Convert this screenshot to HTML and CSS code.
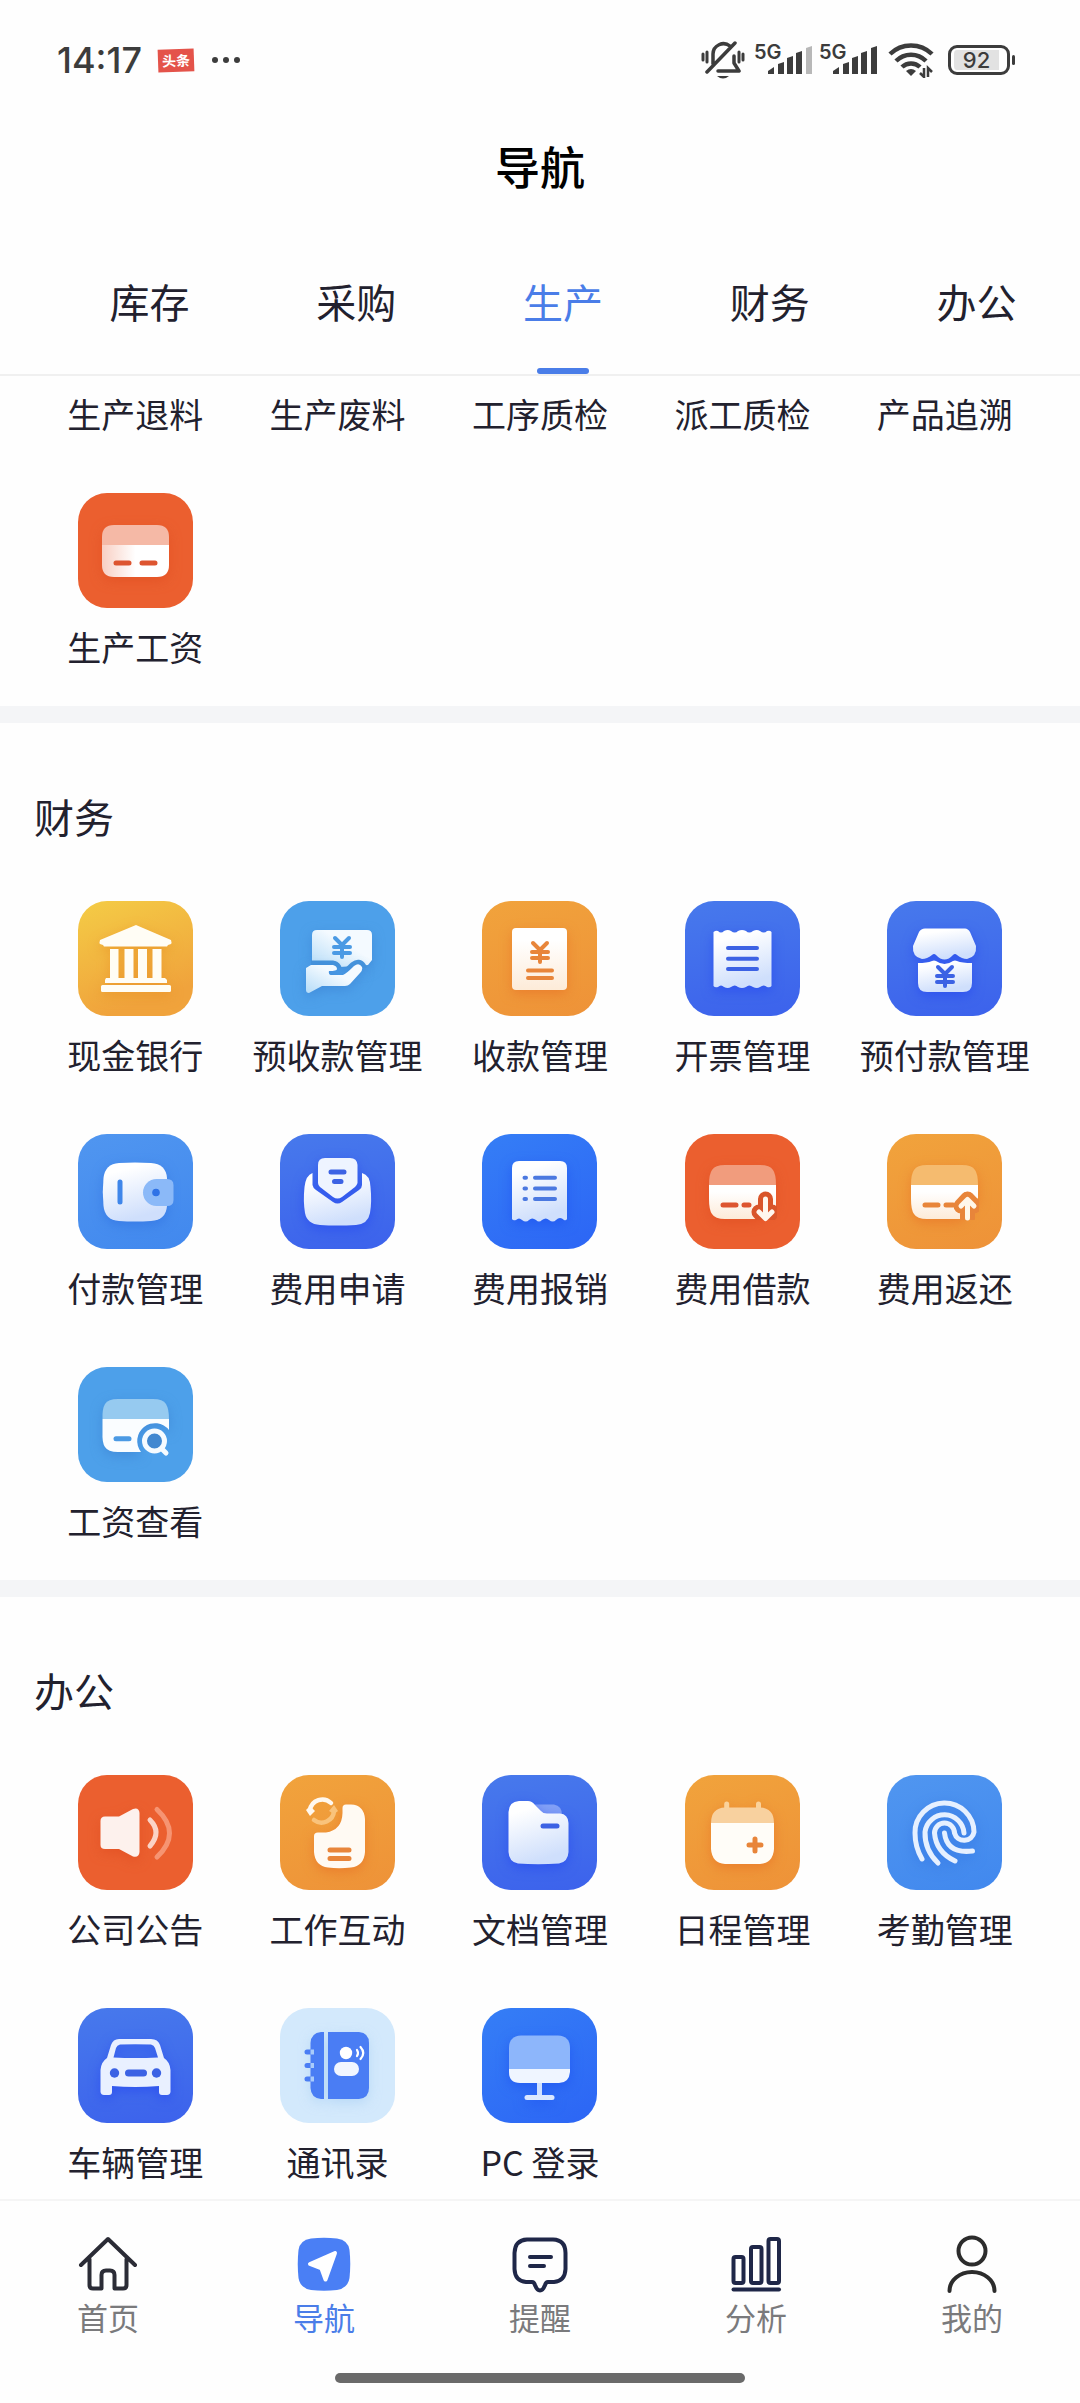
FILE: index.html
```
<!DOCTYPE html>
<html lang="zh-CN">
<head>
  <meta charset="UTF-8">
  <meta name="viewport" content="width=device-width, initial-scale=1.0">
  <title>导航</title>
  <link rel="stylesheet" href="styles.css">
</head>
<body>
  <!-- Shared gradients, card clips and the yuan sign -->
  <svg class="defs" width="0" height="0" aria-hidden="true">
    <defs>
      <linearGradient id="g-blue" x1="0" y1="0" x2="0.3" y2="1">
        <stop offset="0.2" stop-color="#ffffff"/><stop offset="1" stop-color="#cfdffc"/>
      </linearGradient>
      <linearGradient id="g-warm" x1="0" y1="0" x2="0" y2="1">
        <stop offset="0.2" stop-color="#ffffff"/><stop offset="1" stop-color="#fdebd8"/>
      </linearGradient>
      <linearGradient id="g-red" x1="0" y1="0" x2="1" y2="0">
        <stop offset="0" stop-color="#f8cfc3"/><stop offset="0.5" stop-color="#ffffff"/>
      </linearGradient>
      <linearGradient id="g-hand" x1="0" y1="1" x2="1" y2="0">
        <stop offset="0" stop-color="#b5dcf8"/><stop offset="0.6" stop-color="#f4faff"/>
      </linearGradient>
      <clipPath id="c-card"><rect x="23" y="51" width="69" height="35"/></clipPath>
      <clipPath id="c-note"><rect x="31" y="28" width="62" height="39"/></clipPath>
      <symbol id="yuan" viewBox="-12 -12 24 24" overflow="visible">
        <path d="M-7 -9 L0 -2 L7 -9 M0 -2 V10 M-8 0 H8 M-8 6 H8" fill="none" stroke="currentColor" stroke-width="4" stroke-linecap="round" stroke-linejoin="round"/>
      </symbol>
    </defs>
  </svg>

  <div class="app">
    <header>
      <div class="status-bar">
        <div class="status-left">
          <span class="time">14:17</span>
          <span class="news">头条</span>
          <svg width="30" height="8" viewBox="0 0 30 8" fill="#3c3c3c"><circle cx="4" cy="4" r="3"/><circle cx="15" cy="4" r="3"/><circle cx="26" cy="4" r="3"/></svg>
        </div>
        <div class="status-right">
          <svg class="bell" width="44" height="40" viewBox="0 0 44 40" fill="none" stroke="#3c3c3c" stroke-width="3.500" stroke-linecap="round" stroke-linejoin="round">
            <path d="M12 24 V14 A10.500 10.500 0 0 1 29 6 M33 16 V23 L38 31 H17 M6 32 L34 3"/>
            <path d="M2 14 V20 M6 12 V22 M38 12 V22 M42 14 V20" stroke-width="3"/>
            <path d="M16 36 H28 Q22 41 16 36Z" fill="#3c3c3c" stroke="none"/>
          </svg>
          <svg width="60" height="46" viewBox="0 -6 60 46">
            <text class="net" x="1" y="16">5G</text>
            <g fill="#3c3c3c">
              <path d="M15 31 V28 L21 24 V31Z"/><path d="M25 31 V21 L31 19 V31Z"/><path d="M34 31 V15 L40 13 V31Z"/><path d="M43 31 V10 L49 8 V31Z"/>
              <path d="M53 31 V5 L59 3 V31Z" fill="#b8b8b8"/>
            </g>
          </svg>
          <svg width="60" height="46" viewBox="0 -6 60 46">
            <text class="net" x="1" y="16">5G</text>
            <g fill="#3c3c3c">
              <path d="M15 31 V28 L21 24 V31Z"/><path d="M25 31 V21 L31 19 V31Z"/><path d="M34 31 V15 L40 13 V31Z"/><path d="M43 31 V10 L49 8 V31Z"/><path d="M53 31 V5 L59 3 V31Z"/>
            </g>
          </svg>
          <svg class="wifi" width="46" height="36" viewBox="0 0 46 36" fill="none" stroke="#3c3c3c" stroke-width="4.500">
            <path d="M2 12 A30 30 0 0 1 44 12 M8 19 A21 21 0 0 1 38 19 M14 25 A13 13 0 0 1 32 25"/>
            <path d="M18 29 Q23 25 28 29 L23 34Z" fill="#3c3c3c" stroke="none"/>
            <path d="M36 26 V35 L32 31 M40 35 V26 L44 30" stroke-width="2.500"/>
          </svg>
          <div class="battery">92</div>
        </div>
      </div>
      <h1>导航</h1>
      <nav class="tabs">
        <button type="button">库存</button>
        <button type="button">采购</button>
        <button type="button" class="active">生产</button>
        <button type="button">财务</button>
        <button type="button">办公</button>
      </nav>
    </header>

    <main>
      <section class="group production">
        <div class="grid">
          <a href="#"><span>生产退料</span></a>
          <a href="#"><span>生产废料</span></a>
          <a href="#"><span>工序质检</span></a>
          <a href="#"><span>派工质检</span></a>
          <a href="#"><span>产品追溯</span></a>
          <a href="#">
            <svg class="tile red" viewBox="0 0 115 115">
              <g class="art">
                <path d="M24 52 V44 Q24 32 36 32 H79 Q91 32 91 44 V52Z" fill="#f5b9a6"/>
                <path d="M24 52 H91 V72 Q91 84 79 84 H36 Q24 84 24 72Z" fill="url(#g-red)"/>
              </g>
              <path d="M38 70 H51 M64 70 H77" class="line w5"/>
            </svg>
            <span>生产工资</span>
          </a>
        </div>
      </section>

      <section class="group">
        <h2>财务</h2>
        <div class="grid">
          <a href="#">
            <svg class="tile yellow" viewBox="0 0 115 115">
              <g class="art" fill="#fffdf5">
                <path d="M58 24 L93 39 Q94 42 93 43 L90 44 L89 45.500 H26 L25 44 L22 43 Q21 42 22 39Z"/>
                <path d="M32 48 H40.500 V77 H32Z M46.500 48 H55.500 V77 H46.500Z M60 48 H69 V77 H60Z M74.500 48 H83.500 V77 H74.500Z"/>
                <path d="M28 77 H87 L89 79 V82 H27 V79Z"/><rect x="23" y="84" width="70" height="7" rx="1.500"/>
              </g>
            </svg>
            <span>现金银行</span>
          </a>
          <a href="#">
            <svg class="tile sky" viewBox="0 0 115 115">
              <path class="art" d="M32 60 V34 Q32 29 37 29 H87 Q92 29 92 34 V59 L88 64 L60 66 L55 60Z" fill="url(#g-hand)"/>
              <path d="M31 64 H53 Q57 65 57 68 Q57 70 49 70 Q48 74 52 74 H63 Q66 73 74 65 Q79 61 82 66 Q83 69 80 72 L70 83 H42 L26 89Z" clip-path="url(#c-note)" fill="#4593dc" stroke="#4593dc" stroke-width="9" stroke-linejoin="round"/>
              <path class="art" d="M31 64 H53 Q57 65 57 68 Q57 70 49 70 Q48 74 52 74 H63 Q66 73 74 65 Q79 61 82 66 Q83 69 80 72 L70 83 Q68 85 65 85 H42 L29 92 Q26 92 26 89 V67Z" fill="url(#g-hand)"/>
              <use href="#yuan" x="50" y="34" width="24" height="24"/>
            </svg>
            <span>预收款管理</span>
          </a>
          <a href="#">
            <svg class="tile orange" viewBox="0 0 115 115">
              <rect class="art" x="30" y="27" width="55" height="62" rx="4" fill="url(#g-warm)"/>
              <use href="#yuan" x="46" y="39" width="24" height="24"/>
              <path d="M46 69.500 H70 M46 77 H70" class="line w4"/>
            </svg>
            <span>收款管理</span>
          </a>
          <a href="#">
            <svg class="tile blue" viewBox="0 0 115 115">
              <path class="art" d="M28.500 31 Q31 29 33 30 Q36 33 39 30 Q43 28 46 30 Q50 33 53 30 Q57 28 61 30 Q64 33 68 30 Q72 28 75 30 Q79 33 82 30 Q85 29 86.500 31 V85 Q85 87 82 86 Q79 83 75 86 Q72 88 68 86 Q64 83 61 86 Q57 88 53 86 Q50 83 46 86 Q43 88 39 86 Q36 83 33 86 Q30 87 28.500 85Z" fill="url(#g-blue)"/>
              <path d="M43 47 H72 M43 57.700 H72 M43 68 H72" class="line w4"/>
            </svg>
            <span>开票管理</span>
          </a>
          <a href="#">
            <svg class="tile blue" viewBox="0 0 115 115">
              <g class="art" fill="url(#g-blue)">
                <path d="M38 27.500 H78 Q81 27.500 83 31 L89 45 Q90 56 80 58 Q75 58 70 54 Q68 52 66 54 Q57.500 63 49 54 Q47 52 45 54 Q40 58 35 58 Q25 56 26 45 L32 31 Q34 27.500 38 27.500Z"/>
                <path d="M31 62 Q40 62 45 60 Q47 59 49 60 Q57.500 66 66 60 Q68 59 70 60 Q75 62 85 62 V82 Q85 91 76 91 H40 Q31 91 31 82Z"/>
              </g>
              <use href="#yuan" x="46" y="63" width="24" height="24"/>
            </svg>
            <span>预付款管理</span>
          </a>
          <a href="#">
            <svg class="tile azure" viewBox="0 0 115 115">
              <path class="art" d="M41 29 Q57 28 73 29 Q88 30 89 44 V72 Q88 86 73 87 Q57 88 41 87 Q27 86 25.500 72 Q24 58 25.500 44 Q27 30 41 29Z" fill="url(#g-blue)"/>
              <path d="M78.500 45 H89 Q95.500 45 95.500 51 V66 Q95.500 72 89 72 H78.500 A13.500 13.500 0 0 1 78.500 45Z" fill="#8bb9f8"/>
              <circle cx="78" cy="58.500" r="3.800" fill="#2f72e6"/>
              <path d="M42 48 V68" class="line w5"/>
            </svg>
            <span>付款管理</span>
          </a>
          <a href="#">
            <svg class="tile blue" viewBox="0 0 115 115">
              <g class="art">
                <path d="M45 24 H70 Q77 24 77.500 31 V49 Q77 51 75 53 L62 63 Q57.500 66 53 63 L40 53 Q38 51 38 49 V31 Q38 24 45 24Z" fill="#eef4ff"/>
                <path d="M32.500 39 V51 Q33 54 36 56 L53 68 Q57.500 71 62 68 L79 56 Q82 54 82 51 V39 Q90 41 90.500 53 Q92 68 90 79 Q88 90 76 91 Q57 92 40 91 Q27 90 25 79 Q23 67 24.500 53 Q26 41 32.500 39Z" fill="url(#g-blue)"/>
              </g>
              <path d="M51 38 H64 M54.500 47.500 H61" class="line w5"/>
            </svg>
            <span>费用申请</span>
          </a>
          <a href="#">
            <svg class="tile royal" viewBox="0 0 115 115">
              <path class="art" d="M30 85 V34 Q30 27 37 27 H78 Q85 27 85 34 V85 Q84 87 82 86 Q78 82 74 86 Q71 89 67 86 Q64 83 60 86 Q57 89 54 86 Q50 83 47 86 Q44 89 40 86 Q37 83 34 86 Q31 87 30 85Z" fill="url(#g-blue)"/>
              <path d="M42.500 43.700 H44 M53 43.700 H73 M42.500 54.500 H44 M53 54.500 H73 M42.500 65 H44 M53 65 H73" class="line w4"/>
            </svg>
            <span>费用报销</span>
          </a>
          <a href="#">
            <svg class="tile red" viewBox="0 0 115 115">
              <g class="art">
                <path d="M24 51 Q24 40 27 36 Q30 31 40 31 H75 Q85 31 88 36 Q91 40 91 51Z" fill="#f19c7d"/>
                <path d="M24 51 H91 V72 L72 85 H40 Q30 85 27 80 Q24 76 24 65Z" fill="url(#g-warm)"/>
              </g>
              <path d="M38 71 H51 M59 71 H64" class="line w5"/>
              <path d="M80.500 65 V84 M74 78 L80.500 85 L87 78" clip-path="url(#c-card)" fill="none" stroke="#d9552a" stroke-width="15" stroke-linecap="round" stroke-linejoin="round"/>
              <path d="M80.500 65 V84 M74 78 L80.500 84.500 L87 78" fill="none" stroke="#fff7ee" stroke-width="5" stroke-linecap="round" stroke-linejoin="round"/>
            </svg>
            <span>费用借款</span>
          </a>
          <a href="#">
            <svg class="tile orange" viewBox="0 0 115 115">
              <g class="art">
                <path d="M24 51 Q24 40 27 36 Q30 31 40 31 H75 Q85 31 88 36 Q91 40 91 51Z" fill="#f5bb6f"/>
                <path d="M24 51 H91 V64 L80 76 L73 85 H40 Q30 85 27 80 Q24 76 24 65Z" fill="url(#g-warm)"/>
              </g>
              <path d="M38 71 H51 M59 71 H66" class="line w5"/>
              <path d="M80.500 84 V65 M74 72 L80.500 65 L87 72" clip-path="url(#c-card)" fill="none" stroke="#e8853a" stroke-width="15" stroke-linecap="round" stroke-linejoin="round"/>
              <path d="M80.500 84 V66 M74 72 L80.500 65.500 L87 72" fill="none" stroke="#fff7ea" stroke-width="5" stroke-linecap="round" stroke-linejoin="round"/>
            </svg>
            <span>费用返还</span>
          </a>
          <a href="#">
            <svg class="tile sky" viewBox="0 0 115 115">
              <g class="art">
                <path d="M24.500 52 Q24 42 27 37 Q30 32 40 32 H75 Q85 32 88 37 Q91 42 91 52Z" fill="#96caf0"/>
                <path d="M24.500 52 H91 V63 A17 17 0 0 0 63 85 H40 Q30 85 27 80 Q24 76 24.500 65Z" fill="#fafdff"/>
              </g>
              <circle cx="76.500" cy="74" r="9" fill="#4288d0"/>
              <circle cx="76.500" cy="74" r="10" fill="none" stroke="#f6fbff" stroke-width="5"/>
              <path d="M84 82 L88 86" stroke="#f6fbff" stroke-width="5" stroke-linecap="round"/>
              <path d="M38 71.700 H51" class="line w5"/>
            </svg>
            <span>工资查看</span>
          </a>
        </div>
      </section>

      <section class="group">
        <h2>办公</h2>
        <div class="grid">
          <a href="#">
            <svg class="tile red" viewBox="0 0 115 115">
              <path class="art" d="M27 41.500 H41 L55 34 Q61 32 61.500 38 V77 Q61 83 55 81.500 L41 74 H27 Q22.500 74 22.500 70 V46 Q22.500 41.500 27 41.500Z" fill="#fdf1ed"/>
              <g fill="none" stroke-width="5" stroke-linecap="round">
                <path d="M72 45 Q84 57 72 71" stroke="#fbd3c6"/><path d="M79 34.500 Q104 58 79 82" stroke="#f69472"/>
              </g>
            </svg>
            <span>公司公告</span>
          </a>
          <a href="#">
            <svg class="tile orange" viewBox="0 0 115 115">
              <path class="art" d="M66 29.500 H71 Q84 30 85 44 V77 Q84 91 71 92.500 Q59 94 48 92.500 Q35 91 34 77 V61 Q34 57.500 38 57.500 H46 Q62 55 62.500 38 V33 Q62.500 29.500 66 29.500Z" fill="#fffaf3"/>
              <path d="M50 75 H69 M50 83.500 H69" class="line w5"/>
              <g fill="none" stroke-width="4.500" stroke-linecap="round">
                <path d="M30 35 A12.500 12.500 0 0 1 51 28" stroke="#fff8ef"/><path d="M54 36 A12.500 12.500 0 0 1 34 45" stroke="#f9c37c"/>
              </g>
              <path d="M26 35 L30 31 L35 36 L30 41Z" fill="#fff8ef"/><path d="M49 36 L54 30 L58 36 L54 39Z" fill="#f9c37c"/>
            </svg>
            <span>工作互动</span>
          </a>
          <a href="#">
            <svg class="tile blue" viewBox="0 0 115 115">
              <path d="M50 29.500 H72 Q80 31 80 40 H50Z" fill="#83a1f6"/>
              <path class="art" d="M37 26 H46 Q50 26 53 30 L59 36 Q61 38.500 65 38.500 H78 Q86 39 86.500 48 V77 Q86 87 77 88.500 Q56 90 36 88.500 Q27 87 26.500 77 V37 Q27 26.500 37 26Z" fill="url(#g-blue)"/>
              <path d="M61 51 H75" class="line w5"/>
            </svg>
            <span>文档管理</span>
          </a>
          <a href="#">
            <svg class="tile orange" viewBox="0 0 115 115">
              <g class="art">
                <path d="M41.700 29 V36 M73.500 29 V36" stroke="#fad29b" stroke-width="5" stroke-linecap="round"/>
                <path d="M26 48 Q26 33 40 32.500 H75 Q89 33 89 48Z" fill="#f8d19f"/>
                <path d="M26 48 H89 V74 Q88 88 75 89 H40 Q27 88 26 74Z" fill="#fffdf8"/>
              </g>
              <path d="M64 70 H76 M70 64 V76" class="line w5"/>
            </svg>
            <span>日程管理</span>
          </a>
          <a href="#">
            <svg class="tile azure" viewBox="0 0 115 115">
              <g class="art" fill="none" stroke="#e6f0ff" stroke-width="5" stroke-linecap="round">
                <path d="M35 84 Q28 72 28 58 A29.500 29.500 0 0 1 87 57 A10 10 0 0 1 67.500 58 A10 10 0 0 0 47.500 58 Q49 77 68 86"/>
                <path d="M51 88 Q37.500 75 38 57 A19.600 19.600 0 0 1 77 58"/>
                <path d="M57.500 58 Q60 79 85.500 76"/>
              </g>
            </svg>
            <span>考勤管理</span>
          </a>
          <a href="#">
            <svg class="tile blue" viewBox="0 0 115 115">
              <path class="art" fill-rule="evenodd" fill="#e9f0ff" d="M41 31 H73 Q80 31 82 37 L86 50 Q92 54 92.500 62 V84 Q92 87 89 87 H84 Q81 87 81 84 V78 Q57 80 34 78 V84 Q34 87 31 87 H26 Q23 87 22.500 84 V62 Q23 54 29 50 L33 37 Q35 31 41 31Z M42 36.500 Q39 37 38 40 L35.500 49.500 Q57 50.500 80 49.500 L77 40 Q76 37 73 36.500 Q57 36 42 36.500Z"/>
              <circle cx="36.500" cy="65" r="4.700" fill="currentColor"/><circle cx="78.500" cy="65" r="4.700" fill="currentColor"/>
              <path d="M50.500 65 H65.500" class="line" stroke-width="7"/>
            </svg>
            <span>车辆管理</span>
          </a>
          <a href="#">
            <svg class="tile pale" viewBox="0 0 115 115">
              <path class="art" d="M44 24 V91 H41 Q31 90 30.500 80 V35 Q31 25 41 24Z M48 24 H79 Q89 25 89 35 V80 Q89 90 79 91 H48Z" fill="#4a7df4"/>
              <path d="M27 44 H33 M27 57.500 H33 M27 71 H33" class="line w5"/>
              <path d="M30.500 44 H34 M30.500 57.500 H34 M30.500 71 H34" stroke="#a9cbfa" stroke-width="5"/>
              <circle cx="66" cy="45" r="6.200" fill="#fff"/>
              <rect x="54" y="54" width="25" height="14" rx="7" fill="#f1f6ff"/>
              <path d="M77 42 Q79 45 77 48 M80.500 39 Q86 45 80.500 51" fill="none" stroke="#fff" stroke-width="2.200" stroke-linecap="round"/>
            </svg>
            <span>通讯录</span>
          </a>
          <a href="#">
            <svg class="tile royal" viewBox="0 0 115 115">
              <g class="art">
                <path d="M27 61 V40 Q27 28 39 27.500 H76 Q88 28 88 40 V61Z" fill="#8db6fb"/>
                <path d="M27 61 H88 V64 Q87 75 77 75 H38 Q27 75 27 64Z" fill="#eff5ff"/>
                <path d="M57.500 75 V88" stroke="#cfe0ff" stroke-width="5"/><path d="M45 89.500 H70" stroke="#dbe8ff" stroke-width="5" stroke-linecap="round"/>
              </g>
            </svg>
            <span>PC 登录</span>
          </a>
        </div>
      </section>
    </main>

    <footer>
      <nav class="bottom-nav">
        <a href="#">
          <svg viewBox="0 0 60 60" stroke="#2b2c36"><path d="M3 30 L30 4 L57 30 M11.500 24 V50 Q11.500 53.500 15 53.500 H23.500 V40 Q23.500 35.500 28 35.500 H32 Q36.500 35.500 36.500 40 V53.500 H45 Q48.500 53.500 48.500 50 V24"/></svg>
          <span>首页</span>
        </a>
        <a href="#" class="active">
          <svg viewBox="0 0 60 60"><path d="M17 3.500 Q30 2 43 3.500 Q54 5 55.500 15 Q57 29 55.500 43 Q54 53 43 55 Q30 56.500 17 55 Q6 53 4.500 43 Q3 29 4.500 15 Q6 5 17 3.500Z" fill="#4a7ff5"/><path d="M41 18 L16 29 L27.500 33.500 L31.500 44.500Z" fill="#fff" stroke="#fff"/></svg>
          <span>导航</span>
        </a>
        <a href="#">
          <svg viewBox="0 0 60 60" stroke="#1f2748"><path d="M17 4.500 H43 Q55.500 5 55.500 18 V34 Q55 46 44 47 H38 Q36 47 35 50 Q33 55.500 30 55.500 Q27 55.500 25 50 Q24 47 22 47 H16 Q5 46 4.500 34 V18 Q5 5 17 4.500Z M20 22 H41 M20 31 H34"/></svg>
          <span>提醒</span>
        </a>
        <a href="#">
          <svg viewBox="0 0 60 60" stroke="#1f2748"><rect x="7.500" y="22" width="10" height="26" rx="2"/><rect x="25" y="12" width="10.500" height="36" rx="2"/><rect x="42.500" y="4" width="10.500" height="44" rx="2"/><path d="M7.500 54.500 H53"/></svg>
          <span>分析</span>
        </a>
        <a href="#">
          <svg viewBox="0 0 60 60" stroke="#2c2c2c"><circle cx="30" cy="16" r="13.500"/><path d="M7.500 56 A22.500 19 0 0 1 52.500 56"/></svg>
          <span>我的</span>
        </a>
      </nav>
      <div class="home-bar"></div>
    </footer>
  </div>
</body>
</html>
```
FILE: styles.css
```
* {
  margin: 0;
  padding: 0;
  box-sizing: border-box;
}

body {
  font-family: "Noto Sans CJK SC", sans-serif;
  background: #fefefe;
  color: #22212e;
}

a {
  color: inherit;
  text-decoration: none;
}

svg {
  display: block;
  flex: none;
}

.defs {
  position: absolute;
}

.app {
  display: flex;
  flex-direction: column;
  min-height: 100vh;
}

main {
  flex: 1;
}

/* Status bar */
.status-bar {
  display: flex;
  justify-content: space-between;
  align-items: center;
  height: 120px;
  padding: 0 70px 0 57px;
  color: #3c3c3c;
}

.status-left,
.status-right {
  display: flex;
  align-items: center;
}

.time {
  font: 500 36px/44px Inter, sans-serif;
  margin-right: 16px;
}

.news {
  width: 36px;
  margin-right: 17px;
  background: #e4534a;
  color: #fff;
  font-size: 14px;
  font-weight: 700;
  line-height: 23px;
  text-align: center;
  transform: rotate(-2deg);
}

.bell {
  margin-right: 8px;
}

.net {
  font: 600 20px Inter, sans-serif;
  fill: #3c3c3c;
}

.status-right svg + svg {
  margin-right: 5px;
}

.status-right .wifi {
  margin: 0 14px 0 5px;
}

.battery {
  position: relative;
  width: 62px;
  height: 30px;
  border: 3px solid #3c3c3c;
  border-radius: 9px;
  background: #e2e2e2;
  background-clip: content-box;
  padding: 2px 8px 2px 3px;
  font: 500 22px/20px Inter, sans-serif;
  text-align: center;
}

.battery::after {
  content: "";
  position: absolute;
  right: -8px;
  top: 7px;
  width: 3px;
  height: 10px;
  border-radius: 2px;
  background: #3c3c3c;
}

h1 {
  color: #000;
  font-size: 45px;
  font-weight: 500;
  line-height: 92px;
  text-align: center;
}

/* Category tabs */
.tabs {
  display: flex;
  padding-left: 46px;
  border-bottom: 2px solid #f0f0f0;
}

.tabs button {
  flex: 1;
  display: flex;
  flex-direction: column;
  align-items: center;
  gap: 39px;
  padding-top: 61px;
  background: none;
  border: none;
  color: inherit;
  font-family: inherit;
  font-size: 40px;
  line-height: 56px;
  cursor: pointer;
}

.tabs button::after {
  content: "";
  width: 52px;
  height: 6px;
  border-radius: 3px;
}

.tabs .active {
  color: #4a7de8;
}

.tabs .active::after {
  background: #4a7de8;
}

/* Groups of shortcuts */
.group {
  padding: 65px 34px 35px;
}

.group + .group {
  border-top: 17px solid #f4f5f7;
}

.group:last-child {
  padding-bottom: 13px;
}

.production {
  padding-top: 14px;
}

h2 {
  margin-bottom: 57px;
  font-size: 40px;
  font-weight: 400;
  line-height: 56px;
}

.grid {
  display: grid;
  grid-template-columns: repeat(5, 1fr);
  row-gap: 55px;
}

.grid a {
  display: flex;
  flex-direction: column;
  align-items: center;
  gap: 15px;
  font-size: 34px;
  line-height: 48px;
  white-space: nowrap;
}

.tile {
  width: 115px;
  height: 115px;
  border-radius: 29px;
}

.tile .line {
  fill: none;
  stroke: currentColor;
  stroke-linecap: round;
}

.tile .w4 {
  stroke-width: 4px;
}

.tile .w5 {
  stroke-width: 5px;
}

.art {
  filter: drop-shadow(0 4px 6px var(--shade));
}

.red {
  --shade: #e04c2099;
  background: #eb5f2f;
  color: #dd5530;
}

.orange {
  --shade: #e8702499;
  background: linear-gradient(160deg, #f1a33c, #ee9238);
  color: #e8853a;
}

.yellow {
  --shade: #e8902499;
  background: linear-gradient(160deg, #f4cc46, #f0a33c 80%);
  color: #f0a63c;
}

.sky {
  --shade: #3a80d099;
  background: #4da0ea;
  color: #4b9ae4;
}

.azure {
  --shade: #2f6fe099;
  background: linear-gradient(160deg, #5096f0, #4188ee);
  color: #3f86ea;
}

.blue {
  --shade: #2446f099;
  background: linear-gradient(170deg, #4779ec, #3c62ec);
  color: #3c62e4;
}

.royal {
  --shade: #1c50f099;
  background: linear-gradient(150deg, #357ef6, #2c65f5);
  color: #4a78e0;
}

.pale {
  --shade: #a8cef499;
  background: #d3e9fc;
  color: #4a7df4;
}

/* Bottom navigation */
footer {
  border-top: 2px solid #f5f5f5;
  padding: 34px 0 20px;
}

.bottom-nav {
  display: flex;
  margin-bottom: 34px;
}

.bottom-nav a {
  flex: 1;
  display: flex;
  flex-direction: column;
  align-items: center;
  color: #7a7a7c;
  font-size: 31px;
  line-height: 44px;
}

.bottom-nav .active {
  color: #4a7de8;
}

.bottom-nav svg {
  width: 60px;
  height: 60px;
  fill: none;
  stroke-width: 4px;
  stroke-linecap: round;
  stroke-linejoin: round;
}

.home-bar {
  width: 38%;
  height: 10px;
  margin: 0 auto;
  border-radius: 5px;
  background: #6a6a6a;
}
```
